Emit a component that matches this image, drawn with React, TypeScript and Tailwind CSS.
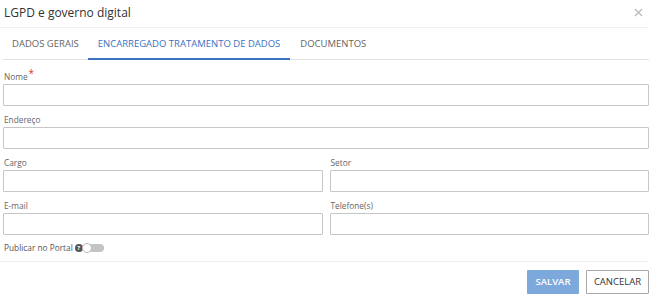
import React from "react";

const font = { fontFamily: '"Open Sans", "Noto Sans", sans-serif' };

function Label({ children, required }: { children: React.ReactNode; required?: boolean }) {
  return (
    <div className="h-[15px] text-[8.3px] leading-[15px] text-[#666] pl-[1px] flex">
      <span>{children}</span>
      {required && <span className="text-[#e0342f] text-[10px] leading-[10px] ml-[1px] -mt-[1px]">*</span>}
    </div>
  );
}

function Field({ label, required }: { label: string; required?: boolean }) {
  return (
    <div className="flex flex-col">
      <Label required={required}>{label}</Label>
      <div className="h-[22px] border border-[#c6c6c6] rounded-[1px] bg-white" />
    </div>
  );
}

export default function App() {
  return (
    <div className="w-[655px] h-[299px] bg-white overflow-hidden" style={font}>
      <div className="w-[649px]">
        <div className="h-[28px] flex items-center border-b border-[#f0f0f0] pl-[4px] pr-[6px]">
          <span className="text-[12px] text-[#333] leading-none -mt-[2px]">LGPD e governo digital</span>
          <svg className="ml-auto -mt-[3px]" width="9" height="9" viewBox="0 0 9 9">
            <path d="M1 1L8 8M8 1L1 8" stroke="#bbb" strokeWidth="1.4" />
          </svg>
        </div>
        <div className="ml-[3px] h-[32px] flex border-b border-[#e3e3e3] text-[9.5px] uppercase">
          <div className="px-[9px] flex items-center text-[#666] pt-[1px]">Dados Gerais</div>
          <div className="px-[10px] flex items-center text-[#3a72c0] border-b-2 border-[#3a72c0] -mb-[1px] pt-[2px]">
            Encarregado Tratamento de Dados
          </div>
          <div className="px-[10px] flex items-center text-[#666] pt-[1px]">Documentos</div>
        </div>
        <div className="pl-[3px] pt-[9px] flex flex-col gap-[6px]">
          <Field label="Nome" required />
          <Field label="Endereço" />
          <div className="grid grid-cols-2 gap-[7px]">
            <Field label="Cargo" />
            <Field label="Setor" />
          </div>
          <div className="grid grid-cols-2 gap-[7px]">
            <Field label="E-mail" />
            <Field label="Telefone(s)" />
          </div>
          <div className="flex items-center h-[14px] text-[8.3px] text-[#555] pl-[1px]">
            <span>Publicar no Portal</span>
            <span className="ml-[2px] w-[8px] h-[8px] rounded-full bg-[#555] text-white text-[6px] leading-[8px] text-center font-bold">?</span>
            <span className="relative w-[21px] h-[8px] rounded-full bg-[#c4c4c4]">
              <span className="absolute -left-[1px] -top-[1px] w-[10px] h-[10px] rounded-full bg-white border border-[#bbb]" />
            </span>
          </div>
        </div>
        <div className="mt-[6px] border-t border-[#f0f0f0] flex justify-end gap-[7px] pt-[8px]">
          <button className="h-[24px] w-[52px] bg-[#7ca8dc] text-white text-[9.5px] font-semibold rounded-[1px]">
            SALVAR
          </button>
          <button className="h-[24px] w-[63px] border border-[#a8a8a8] bg-white text-[#333] text-[9.5px] rounded-[1px]">
            CANCELAR
          </button>
        </div>
      </div>
    </div>
  );
}
